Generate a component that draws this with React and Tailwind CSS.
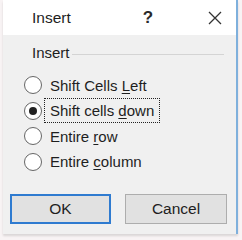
const options = [
	{ pre: "Shift Cells ", key: "L", post: "eft" },
	{ pre: "Shift cells ", key: "d", post: "own", checked: true },
	{ pre: "Entire ", key: "r", post: "ow" },
	{ pre: "Entire ", key: "c", post: "olumn" },
];

function Radio({ checked }) {
	return (
		<span className="w-[18px] h-[18px] rounded-full border-[1.5px] border-[#666] bg-white flex items-center justify-center shrink-0">
			{checked && <span className="w-[8px] h-[8px] rounded-full bg-[#222]" />}
		</span>
	);
}

export default function App() {
	return (
		<div className="w-[242px] h-[240px] bg-[#f8f3f4] flex font-['Liberation_Sans',Arial,sans-serif] text-[#1e1e1e]">
			<div className="ml-[3px] w-[235px] h-[234px] flex flex-col bg-[#f0f0f0] border-r-[2px] border-[#7fb0dc] shadow-[0_2px_2px_rgba(0,0,0,0.12)]">
				{/* Title bar */}
				<div className="h-[35px] bg-white flex items-center shrink-0">
					<span className="ml-[29px] text-[15.5px]">Insert</span>
					<span className="ml-[72px] text-[17px] font-semibold text-[#2a2a2a]">?</span>
					<svg className="ml-[55px]" width="14" height="14" viewBox="0 0 14 14">
						<path d="M1 1L13 13M13 1L1 13" stroke="#333" strokeWidth="1.3" />
					</svg>
				</div>

				{/* Group */}
				<div className="flex items-center pl-[29px] pr-[12px] mt-[7px]">
					<span className="text-[15px]">Insert</span>
					<span className="flex-1 ml-[2px] h-px bg-[#d4d4d4] mt-[2px]" />
				</div>

				<div className="flex flex-col mt-[12px] pl-[21px] gap-[8px]">
					{options.map((o, i) => (
						<div key={i} className="flex items-center h-[17.5px]">
							<Radio checked={o.checked} />
							<span
								className={`ml-[2px] px-[5px] text-[15px] leading-[23px] border border-dotted ${
									o.checked ? "border-[#222]" : "border-transparent"
								}`}
							>
								{o.pre}
								<span className="underline underline-offset-2">{o.key}</span>
								{o.post}
							</span>
						</div>
					))}
				</div>

				{/* Buttons */}
				<div className="flex mt-auto mb-[10px] pl-[7px] gap-[14px]">
					<button className="w-[101px] h-[30px] bg-[#e1e1e1] border-2 border-[#2f7bd0] text-[15.5px]">
						OK
					</button>
					<button className="w-[102px] h-[30px] bg-[#e1e1e1] border border-[#adadad] text-[15.5px]">
						Cancel
					</button>
				</div>
			</div>
		</div>
	);
}
